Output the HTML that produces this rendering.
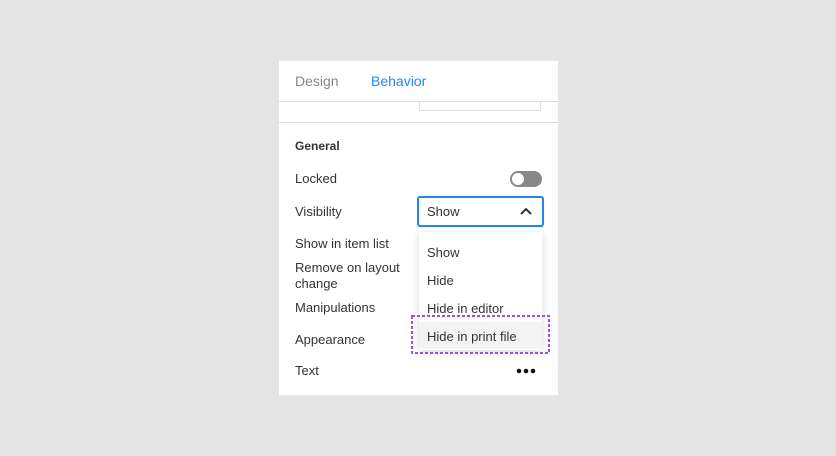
<!DOCTYPE html>
<html><head><style>
body{margin:0;width:836px;height:456px;background:#e5e5e5;font-family:"Liberation Sans",sans-serif;position:relative;overflow:hidden}
.p{position:absolute;left:279px;top:61px;width:279px;height:334px;background:#fff}
.t{position:absolute;font-size:13px;color:#333;white-space:nowrap}
.a{position:absolute}
</style></head><body>
<div class="p"></div>
<div class="t" style="left:295px;top:73px;color:#888;font-size:14px">Design</div>
<div class="t" style="left:371px;top:73px;color:#1e88f0;font-size:14px">Behavior</div>
<div class="a" style="left:279px;top:101px;width:279px;height:1px;background:#ddd"></div>
<div class="a" style="left:419px;top:101px;width:122px;height:10px;border:1px solid #ddd;border-top:none;box-sizing:border-box"></div>
<div class="a" style="left:279px;top:122px;width:279px;height:1px;background:#ddd"></div>
<div class="t" style="left:295px;top:139px;font-weight:bold;font-size:12px">General</div>
<div class="t" style="left:295px;top:171px">Locked</div>
<div class="a" style="left:510px;top:171px;width:32px;height:16px;border-radius:8px;background:#888"></div>
<div class="a" style="left:512px;top:173px;width:12px;height:12px;border-radius:6px;background:#fff"></div>
<div class="t" style="left:295px;top:204px">Visibility</div>
<div class="a" style="left:417px;top:196px;width:127px;height:31px;border:2px solid #1e88f0;border-radius:3px;box-sizing:border-box"></div>
<div class="t" style="left:427px;top:204px">Show</div>
<svg class="a" style="left:519px;top:206px" width="14" height="10"><path d="M2 8L7 3L12 8" stroke="#333" stroke-width="2" fill="none"/></svg>
<div class="t" style="left:295px;top:236px">Show in item list</div>
<div class="t" style="left:295px;top:260px;line-height:16px">Remove on layout<br>change</div>
<div class="t" style="left:295px;top:300px">Manipulations</div>
<div class="t" style="left:295px;top:332px">Appearance</div>
<div class="t" style="left:295px;top:363px">Text</div>
<svg class="a" style="left:515px;top:367px" width="22" height="8"><circle cx="4" cy="4" r="2.3" fill="#111"/><circle cx="11" cy="4" r="2.3" fill="#111"/><circle cx="18" cy="4" r="2.3" fill="#111"/></svg>
<div class="a" style="left:419px;top:232px;width:123px;height:118px;background:#fff;box-shadow:0 2px 8px rgba(0,0,0,.15)"></div>
<div class="a" style="left:419px;top:322px;width:123px;height:27px;background:#f3f3f3"></div>
<div class="t" style="left:427px;top:245px">Show</div>
<div class="t" style="left:427px;top:273px">Hide</div>
<div class="t" style="left:427px;top:301px">Hide in editor</div>
<div class="t" style="left:427px;top:329px">Hide in print file</div>
<svg class="a" style="left:411px;top:315px" width="139" height="39"><rect x="1" y="1" width="137" height="37" fill="none" stroke="#9a4ff0" stroke-width="2" stroke-dasharray="3 2"/></svg>
</body></html>
